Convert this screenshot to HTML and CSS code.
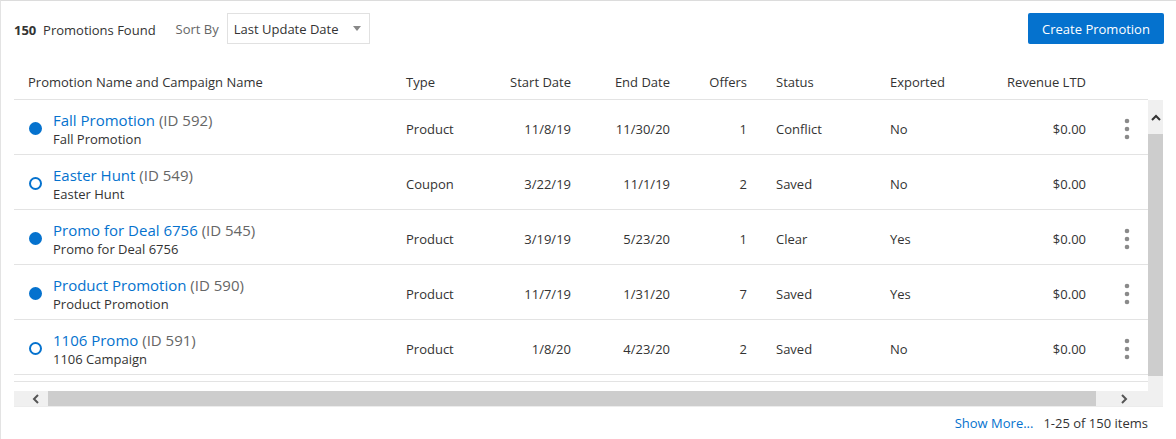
FILE: index.html
```html
<!DOCTYPE html>
<html lang="en">
<head>
    <meta charset="UTF-8">
    <title>Promotions</title>
    <link rel="stylesheet" href="styles.css">
</head>
<body>
<div class="panel">
    <!-- Toolbar -->
    <div class="toolbar">
        <div class="summary"><b>150</b>&nbsp; Promotions Found</div>
        <span class="sort-label">Sort By</span>
        <div class="select">Last Update Date <span class="caret"></span></div>
        <button class="btn-primary">Create Promotion</button>
    </div>

    <!-- Promotions table -->
    <div class="table">
        <div class="thead cols">
            <div class="c c-name">Promotion Name and Campaign Name</div>
            <div class="c">Type</div>
            <div class="c c-r">Start Date</div>
            <div class="c c-r">End Date</div>
            <div class="c c-r">Offers</div>
            <div class="c c-status">Status</div>
            <div class="c">Exported</div>
            <div class="c c-r">Revenue LTD</div>
            <div class="c"></div>
        </div>

        <div class="scroll-area">
            <div class="tbody">
                <div class="row cols">
                    <div class="c c-name name-cell">
                        <span class="dot filled"></span>
                        <div>
                            <div class="title"><a class="link">Fall Promotion</a> <span class="id">(ID 592)</span></div>
                            <div class="sub">Fall Promotion</div>
                        </div>
                    </div>
                    <div class="c">Product</div>
                    <div class="c c-r">11/8/19</div>
                    <div class="c c-r">11/30/20</div>
                    <div class="c c-r">1</div>
                    <div class="c c-status">Conflict</div>
                    <div class="c">No</div>
                    <div class="c c-r">$0.00</div>
                    <div class="c c-act"><svg class="kebab" width="6" height="22" viewBox="0 0 6 22"><circle cx="3" cy="3" r="2.3"/><circle cx="3" cy="11" r="2.3"/><circle cx="3" cy="19" r="2.3"/></svg></div>
                </div>
                <div class="row cols">
                    <div class="c c-name name-cell">
                        <span class="dot"></span>
                        <div>
                            <div class="title"><a class="link">Easter Hunt</a> <span class="id">(ID 549)</span></div>
                            <div class="sub">Easter Hunt</div>
                        </div>
                    </div>
                    <div class="c">Coupon</div>
                    <div class="c c-r">3/22/19</div>
                    <div class="c c-r">11/1/19</div>
                    <div class="c c-r">2</div>
                    <div class="c c-status">Saved</div>
                    <div class="c">No</div>
                    <div class="c c-r">$0.00</div>
                    <div class="c c-act"></div>
                </div>
                <div class="row cols">
                    <div class="c c-name name-cell">
                        <span class="dot filled"></span>
                        <div>
                            <div class="title"><a class="link">Promo for Deal 6756</a> <span class="id">(ID 545)</span></div>
                            <div class="sub">Promo for Deal 6756</div>
                        </div>
                    </div>
                    <div class="c">Product</div>
                    <div class="c c-r">3/19/19</div>
                    <div class="c c-r">5/23/20</div>
                    <div class="c c-r">1</div>
                    <div class="c c-status">Clear</div>
                    <div class="c">Yes</div>
                    <div class="c c-r">$0.00</div>
                    <div class="c c-act"><svg class="kebab" width="6" height="22" viewBox="0 0 6 22"><circle cx="3" cy="3" r="2.3"/><circle cx="3" cy="11" r="2.3"/><circle cx="3" cy="19" r="2.3"/></svg></div>
                </div>
                <div class="row cols">
                    <div class="c c-name name-cell">
                        <span class="dot filled"></span>
                        <div>
                            <div class="title"><a class="link">Product Promotion</a> <span class="id">(ID 590)</span></div>
                            <div class="sub">Product Promotion</div>
                        </div>
                    </div>
                    <div class="c">Product</div>
                    <div class="c c-r">11/7/19</div>
                    <div class="c c-r">1/31/20</div>
                    <div class="c c-r">7</div>
                    <div class="c c-status">Saved</div>
                    <div class="c">Yes</div>
                    <div class="c c-r">$0.00</div>
                    <div class="c c-act"><svg class="kebab" width="6" height="22" viewBox="0 0 6 22"><circle cx="3" cy="3" r="2.3"/><circle cx="3" cy="11" r="2.3"/><circle cx="3" cy="19" r="2.3"/></svg></div>
                </div>
                <div class="row cols">
                    <div class="c c-name name-cell">
                        <span class="dot"></span>
                        <div>
                            <div class="title"><a class="link">1106 Promo</a> <span class="id">(ID 591)</span></div>
                            <div class="sub">1106 Campaign</div>
                        </div>
                    </div>
                    <div class="c">Product</div>
                    <div class="c c-r">1/8/20</div>
                    <div class="c c-r">4/23/20</div>
                    <div class="c c-r">2</div>
                    <div class="c c-status">Saved</div>
                    <div class="c">No</div>
                    <div class="c c-r">$0.00</div>
                    <div class="c c-act"><svg class="kebab" width="6" height="22" viewBox="0 0 6 22"><circle cx="3" cy="3" r="2.3"/><circle cx="3" cy="11" r="2.3"/><circle cx="3" cy="19" r="2.3"/></svg></div>
                </div>
                <div class="row-stub"></div>
            </div>

            <!-- Vertical scrollbar -->
            <div class="vscroll">
                <div class="vs-up"><svg width="10" height="7" viewBox="0 0 10 7"><polyline points="1,6 5,2 9,6" fill="none" stroke="#333" stroke-width="2"/></svg></div>
                <div class="vs-thumb"></div>
            </div>

            <!-- Horizontal scrollbar -->
            <div class="hscroll">
                <div class="hs-left"><svg width="7" height="10" viewBox="0 0 7 10"><polyline points="6,1 2,5 6,9" fill="none" stroke="#555" stroke-width="2"/></svg></div>
                <div class="hs-thumb"></div>
                <div class="hs-right"><svg width="7" height="10" viewBox="0 0 7 10"><polyline points="1,1 5,5 1,9" fill="none" stroke="#555" stroke-width="2"/></svg></div>
            </div>
        </div>

        <!-- Footer -->
        <div class="footer">
            <a class="link-sm">Show More...</a>
            <span>1-25 of 150 items</span>
        </div>
    </div>
</div>
</body>
</html>
```

FILE: styles.css
```css
/* Palette */
:root {
    --blue: #0572ce;
    --text: #333333;
    --muted: #666666;
    --line: #e3e3e3;
    --track: #f0f0f0;
    --thumb: #cdcdcd;
}

body {
    margin: 0;
    font-family: "Open Sans", "Noto Sans", sans-serif;
    font-size: 13px;
    color: var(--text);
    background: #fff;
}

.panel {
    height: 439px;
    box-sizing: border-box;
    border-top: 1px solid #dcdcdc;
    border-left: 1px solid #e3e3e3;
    padding: 12px 12px 0 13px;
}

/* Toolbar */
.toolbar {
    display: flex;
    align-items: center;
    height: 31px;
}

.summary {
    padding-top: 3px;
    margin-right: 20px;
}

.summary b {
    font-weight: 700;
}

.sort-label {
    color: var(--muted);
    margin-right: 8px;
    padding-top: 1px;
}

.select {
    display: flex;
    align-items: center;
    width: 143px;
    height: 31px;
    box-sizing: border-box;
    border: 1px solid #e1e1e1;
    padding-left: 6px;
}

.caret {
    margin-left: auto;
    margin-right: 8px;
    width: 0;
    height: 0;
    border-left: 4.5px solid transparent;
    border-right: 4.5px solid transparent;
    border-top: 5px solid #888;
}

.btn-primary {
    margin-left: auto;
    width: 136px;
    height: 31px;
    border: none;
    border-radius: 2px;
    background: var(--blue);
    color: #fff;
    font-family: inherit;
    font-size: 13px;
    padding: 0;
}

/* Table */
.table {
    width: 1149px;
}

.cols {
    display: grid;
    grid-template-columns: 380px 104px 85px 99px 77px 119px 112px 108px 50px;
}

.c {
    padding: 0 12px;
    white-space: nowrap;
}

.c-name {
    padding-left: 14px;
}

.c-r {
    text-align: right;
}

.c-status {
    padding-left: 17px;
}

.thead {
    width: 1134px;
    margin-top: 20px;
    height: 36px;
    box-sizing: border-box;
    align-items: center;
    border-bottom: 1px solid var(--line);
}

.scroll-area {
    display: grid;
    grid-template-columns: 1134px 15px;
    grid-template-rows: 291px 16px;
}

.tbody {
    overflow: hidden;
}

.row {
    height: 55px;
    box-sizing: border-box;
    align-items: center;
    border-bottom: 1px solid var(--line);
}

.row .c {
    padding-top: 3px;
}

.row-stub {
    height: 6px;
    border-bottom: 1px solid var(--line);
}

.name-cell {
    display: flex;
    align-items: center;
}

.dot {
    width: 13px;
    height: 13px;
    box-sizing: border-box;
    border-radius: 50%;
    border: 2px solid var(--blue);
    margin: -1px 11px 0 1px;
    flex: none;
}

.dot.filled {
    background: var(--blue);
}

.title {
    font-size: 15px;
    line-height: 20px;
}

.link {
    color: var(--blue);
}

.id {
    color: var(--muted);
}

.sub {
    line-height: 18px;
}

.c-act {
    display: flex;
    justify-content: center;
    padding-left: 20px;
}

.kebab {
    fill: #8a8a8a;
}

/* Fake scrollbars */
.vscroll {
    display: flex;
    flex-direction: column;
    background: var(--track);
}

.vs-up {
    height: 34px;
    display: flex;
    justify-content: center;
    align-items: center;
}

.vs-thumb {
    height: 242px;
    background: var(--thumb);
}

.hscroll {
    grid-column: 1 / 3;
    display: flex;
    background: var(--track);
    border-bottom: 1px solid #ececec;
}

.hs-left {
    width: 34px;
    display: flex;
    align-items: center;
    padding-left: 18px;
    box-sizing: border-box;
}

.hs-thumb {
    width: 1048px;
    background: var(--thumb);
}

.hs-right {
    flex: 1;
    display: flex;
    align-items: center;
    padding-left: 25px;
}

/* Footer */
.footer {
    display: flex;
    justify-content: flex-end;
    gap: 10px;
    padding: 7px 15px 0 0;
    line-height: 18px;
}

.link-sm {
    color: var(--blue);
}
```
